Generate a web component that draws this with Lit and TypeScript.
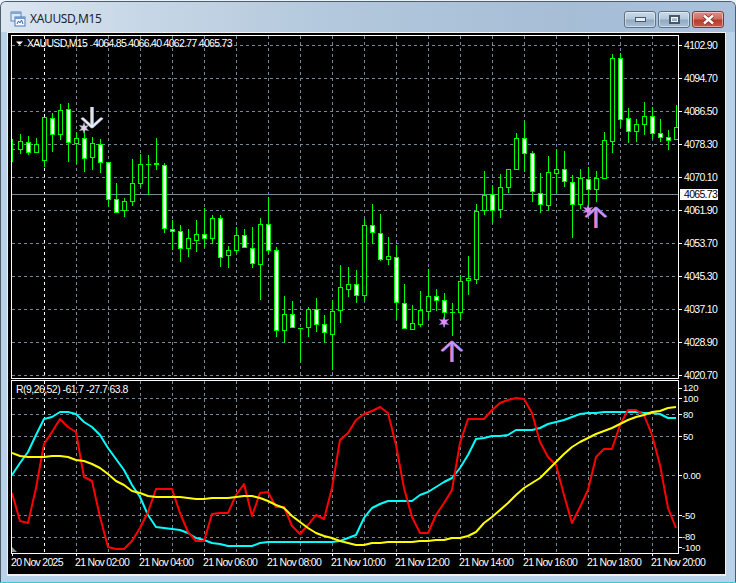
import { LitElement, html, css, svg } from "lit";
import { customElement } from "lit/decorators.js";

// [wick top, wick bottom, body top, body bottom, filled]
const CANDLES: [number, number, number, number, number][] = [
  [139, 162, 149, 149, 0], [134, 154, 141, 149, 0], [136, 155, 142, 152, 1], [138, 153, 144, 152, 0],
  [117, 167, 117, 160, 0], [113, 152, 118, 134, 1], [104, 140, 110, 134, 0], [103, 162, 109, 142, 1],
  [132, 164, 138, 143, 0], [130, 172, 138, 158, 1], [137, 170, 143, 157, 0], [139, 173, 144, 162, 1],
  [162, 207, 162, 199, 1], [183, 213, 199, 212, 1], [198, 217, 201, 210, 0], [159, 206, 183, 201, 0],
  [154, 187, 164, 183, 0], [155, 195, 164, 164, 0], [138, 170, 163, 164, 1], [163, 233, 165, 228, 1],
  [220, 250, 229, 231, 1], [225, 262, 231, 248, 1], [229, 257, 238, 248, 0], [220, 252, 234, 240, 0],
  [208, 248, 234, 238, 1], [215, 244, 218, 238, 0], [215, 267, 218, 257, 1], [246, 268, 250, 255, 0],
  [227, 253, 235, 250, 0], [229, 248, 235, 247, 1], [227, 268, 248, 263, 1], [218, 300, 224, 264, 0],
  [197, 253, 224, 250, 1], [247, 337, 250, 330, 1], [296, 343, 314, 330, 0], [301, 328, 314, 327, 1],
  [328, 362, 328, 328, 0], [307, 337, 309, 327, 0], [298, 332, 309, 324, 1], [315, 343, 324, 332, 1],
  [300, 370, 311, 334, 0], [265, 323, 287, 310, 0], [267, 297, 284, 289, 0], [270, 303, 284, 295, 1],
  [219, 301, 225, 295, 0], [204, 244, 225, 232, 1], [214, 261, 233, 259, 1], [237, 265, 256, 259, 0],
  [245, 319, 257, 302, 1], [284, 328, 303, 328, 1], [305, 329, 323, 329, 0], [291, 327, 310, 324, 0],
  [269, 319, 296, 311, 0], [289, 311, 296, 300, 1], [293, 327, 300, 312, 1], [303, 336, 312, 312, 0],
  [275, 320, 281, 312, 0], [256, 295, 278, 280, 0], [204, 284, 211, 279, 0], [171, 215, 195, 210, 0],
  [185, 223, 194, 210, 1], [174, 218, 187, 209, 0], [169, 193, 169, 187, 0], [133, 170, 138, 169, 0],
  [121, 172, 138, 153, 1], [151, 202, 153, 191, 1], [173, 213, 193, 204, 1], [156, 210, 172, 205, 0],
  [149, 193, 169, 173, 0], [151, 187, 169, 181, 1], [175, 238, 182, 204, 1], [169, 209, 178, 204, 0],
  [167, 207, 179, 189, 1], [171, 202, 178, 189, 0], [132, 179, 140, 178, 0], [54, 153, 58, 141, 0],
  [53, 127, 58, 119, 1], [108, 143, 118, 131, 1], [119, 142, 124, 131, 0], [102, 135, 116, 124, 0],
  [107, 139, 116, 133, 1], [119, 142, 133, 137, 1], [130, 150, 137, 140, 1], [105, 140, 127, 139, 0],
];

const RED = [493, 521, 523, 488, 444, 432, 419, 427, 432, 477, 481, 517, 547, 549, 549, 541, 528, 512, 489, 489, 489, 513, 532, 541, 541, 514, 513, 513, 495, 484, 516, 493, 492, 507, 507, 526, 534, 525, 515, 519, 488, 440, 433, 420, 414, 411, 407, 413, 445, 488, 517, 533, 533, 515, 503, 490, 443, 419, 419, 419, 410, 403, 400, 398, 399, 413, 442, 457, 465, 495, 523, 507, 490, 457, 449, 449, 425, 410, 410, 415, 435, 465, 508, 528];
const CYAN = [475, 463, 452, 435, 419, 417, 412, 412, 414, 422, 427, 435, 448, 459, 470, 485, 497, 515, 527, 528, 529, 530, 533, 538, 540, 543, 544, 546, 546, 546, 546, 543, 542, 542, 542, 542, 542, 542, 542, 542, 542, 541, 538, 535, 518, 508, 504, 501, 501, 501, 501, 495, 492, 487, 482, 478, 468, 455, 439, 438, 436, 436, 435, 430, 430, 430, 428, 424, 422, 420, 417, 414, 413, 413, 412, 412, 412, 412, 412, 413, 413, 414, 418, 418];
const YELLOW = [453, 456, 457, 457, 457, 456, 456, 457, 460, 461, 464, 468, 474, 481, 485, 491, 493, 496, 497, 497, 497, 497, 498, 499, 499, 498, 498, 498, 497, 496, 496, 498, 501, 505, 508, 516, 522, 528, 533, 536, 538, 541, 543, 545, 545, 543, 543, 542, 542, 542, 542, 541, 541, 540, 540, 538, 538, 536, 532, 523, 517, 510, 503, 495, 488, 483, 478, 470, 462, 454, 447, 442, 438, 434, 431, 428, 424, 420, 417, 415, 412, 411, 408, 407];

const PRICES: [string, number][] = [
  ["4102.90", 45], ["4094.70", 78], ["4086.50", 111], ["4078.30", 144], ["4070.10", 177], ["4061.90", 210],
  ["4053.70", 243], ["4045.30", 276], ["4037.10", 309], ["4028.90", 342], ["4020.70", 375],
];
// label, tick y, has grid line, text nudge so the tight pairs keep apart
const LEVELS: [string, number, boolean, number][] = [
  ["120", 388, false, -0.5], ["100", 398, true, 0.5], ["80", 414, true, 0], ["50", 436, true, 0], ["0.00", 475, true, 0],
  ["-50", 515, true, 0], ["-80", 537, true, -0.5], ["-100", 547, false, 0.5],
];
const TIMES: [string, number][] = [
  ["20 Nov 2025", 12], ["21 Nov 02:00", 76], ["21 Nov 04:00", 140], ["21 Nov 06:00", 204], ["21 Nov 08:00", 268],
  ["21 Nov 10:00", 332], ["21 Nov 12:00", 396], ["21 Nov 14:00", 460], ["21 Nov 16:00", 524], ["21 Nov 18:00", 588],
  ["21 Nov 20:00", 652],
];

const L = 11, R = 678, TOP = 35, MID = 378, SUB = 380, BOT = 553;

const points = (ys: number[]) => ys.map((y, i) => `${12 + 8 * i},${y}`).join(" ");

@customElement("mt-chart")
class MtChart extends LitElement {
  static styles = css`
    :host {
      display: block;
      flex: 1;
      min-height: 0;
      background: #000;
    }
    svg {
      display: block;
      width: 100%;
      height: 100%;
    }
    text {
      font-family: "Liberation Sans", Arial, sans-serif;
      font-size: 10.5px;
      letter-spacing: -0.7px;
      fill: #fff;
    }
    text.level {
      font-size: 9.5px;
      letter-spacing: -0.2px;
    }
    text.legend {
      letter-spacing: -0.55px;
    }
    .crisp {
      shape-rendering: crispEdges;
    }
    .grid {
      stroke: #778899;
      stroke-width: 1;
      stroke-dasharray: 3 3;
      fill: none;
    }
    .day {
      stroke: #fff;
    }
    .frame {
      stroke: #fff;
      stroke-width: 1;
      fill: none;
    }
    .bid {
      stroke: #778899;
      stroke-width: 1;
    }
    .wick {
      stroke: #00ff00;
      stroke-width: 1;
    }
    .body {
      stroke: #00ff00;
      stroke-width: 1;
      fill: #000;
    }
    .body.down {
      fill: #fff;
    }
    .ind {
      fill: none;
      stroke-width: 2;
      stroke-linejoin: round;
    }
    .label-box {
      fill: #fff;
    }
    .label-text {
      fill: #000;
    }
    .arrow {
      fill: none;
      stroke-width: 2.2;
    }
    .arrow.core {
      stroke-width: 1.4;
    }
  `;

  private vline(x: number, y1: number, y2: number, cls = "grid") {
    return svg`<line class=${cls} x1=${x + 0.5} x2=${x + 0.5} y1=${y1} y2=${y2}></line>`;
  }

  private hline(y: number, x1: number, x2: number, cls = "grid") {
    return svg`<line class=${cls} x1=${x1} x2=${x2} y1=${y + 0.5} y2=${y + 0.5}></line>`;
  }

  private candle(c: [number, number, number, number, number], i: number) {
    const x = 12 + 8 * i;
    const [wt, wb, bt, bb, filled] = c;
    // a candle at the edge is cut by the clip rect
    return svg`
      <line class="wick" x1=${x + 0.5} x2=${x + 0.5} y1=${wt} y2=${wb}></line>
      ${bb - bt < 1
        ? svg`<line class="wick" x1=${x - 2} x2=${x + 3} y1=${bt + 0.5} y2=${bt + 0.5}></line>`
        : svg`<rect class="body ${filled ? "down" : ""}" x=${x - 1.5} y=${bt + 0.5} width="4" height=${bb - bt}></rect>`}
    `;
  }

  private arrow(x: number, tip: number, dir: number, main: string, edge: string, shade: string) {
    const wing = tip + dir * 10;
    const end = tip + dir * 21;
    const d = `M${x - 10} ${wing} L${x} ${tip + dir} L${x + 10} ${wing} M${x} ${tip + dir} L${x} ${end}`;
    return svg`
      <path class="arrow" d=${d} stroke=${edge} transform="translate(-0.7 0)"></path>
      <path class="arrow" d=${d} stroke=${shade} transform="translate(0.7 0)"></path>
      <path class="arrow core" d=${d} stroke=${main}></path>
    `;
  }

  private star(cx: number, cy: number, fill: string, edge: string) {
    const pts: string[] = [];
    for (let k = 0; k < 12; k++) {
      const r = k % 2 ? 2.4 : 5.4;
      const a = (Math.PI / 6) * k;
      pts.push(`${(cx + r * Math.sin(a)).toFixed(1)},${(cy - r * Math.cos(a)).toFixed(1)}`);
    }
    return svg`<polygon points=${pts.join(" ")} fill=${fill} stroke=${edge} stroke-width="0.5"></polygon>`;
  }

  render() {
    const verts: number[] = [];
    for (let x = 44; x < R; x += 32) verts.push(x);
    return html`
      <svg viewBox="8 33 717 541">
        <defs>
          <clipPath id="main"><rect x=${L + 1} y=${TOP + 1} width=${R - L - 1} height=${MID - TOP - 1}></rect></clipPath>
          <clipPath id="sub"><rect x=${L + 1} y=${SUB + 1} width=${R - L - 1} height=${BOT - SUB - 1}></rect></clipPath>
        </defs>

        <g class="crisp">
          ${verts.map((x) => this.vline(x, TOP + 1, MID, x === 44 ? "grid day" : "grid"))}
          ${verts.map((x) => this.vline(x, SUB + 1, BOT, x === 44 ? "grid day" : "grid"))}
          ${PRICES.map(([, y]) => this.hline(y, L + 1, R))}
          ${LEVELS.filter((l) => l[2]).map(([, y]) => this.hline(y, L + 1, R))}
          ${this.hline(194, L + 1, R, "bid")}
          <g clip-path="url(#main)">${CANDLES.map((c, i) => this.candle(c, i))}</g>
          <rect class="frame" x=${L + 0.5} y=${TOP + 0.5} width=${R - L} height=${MID - TOP}></rect>
          <rect class="frame" x=${L + 0.5} y=${SUB + 0.5} width=${R - L} height=${BOT - SUB}></rect>
          ${PRICES.map(([, y]) => this.hline(y, R, R + 4, "frame"))}
          ${LEVELS.map(([, y]) => this.hline(y, R, R + 4, "frame"))}
          ${TIMES.map(([, x]) => this.vline(x, BOT, BOT + 3, "frame"))}
        </g>

        <g clip-path="url(#sub)">
          <polyline class="ind" stroke="#00ffff" points=${points(CYAN)}></polyline>
          <polyline class="ind" stroke="#ff0000" points=${points(RED)}></polyline>
          <polyline class="ind" stroke="#ffff00" points=${points(YELLOW)}></polyline>
        </g>

        <polygon points="12,547 17,552 12,552" fill="#8a949e"></polygon>
        <polygon points="16,41.5 23,41.5 19.5,45" fill="#fff"></polygon>

        ${this.star(84, 128, "#dcd4e0", "#8088a8")}
        ${this.arrow(92, 128, -1, "#eef2fa", "#c8b8b8", "#a8c0e8")}
        ${this.star(444, 322, "#e48cf2", "#7a70e8")}
        ${this.arrow(452, 341, 1, "#c79cff", "#f070b0", "#8070f0")}
        ${this.star(588, 210, "#e48cf2", "#7a70e8")}
        ${this.arrow(596, 207, 1, "#c79cff", "#f070b0", "#8070f0")}

        <text x="27" y="47">XAUUSD,M15</text>
        <text x="93" y="47">4064.85 4066.40 4062.77 4065.73</text>
        <text class="legend" x="16" y="393">R(9,26,52) -61.7 -27.7 63.8</text>

        ${PRICES.map(([t, y]) => svg`<text x="684" y=${y + 4}>${t}</text>`)}
        ${LEVELS.map(([t, y, , n]) => svg`<text class="level" x=${t.startsWith("-") ? 682 : 683} y=${y + 3.5 + n}>${t}</text>`)}
        ${TIMES.map(([t, x]) => svg`<text x=${x - 1} y="566">${t}</text>`)}

        <rect class="label-box" x="680" y="189" width="38" height="11"></rect>
        <text class="label-text" x="684" y="198">4065.73</text>
      </svg>
    `;
  }
}

@customElement("app-root")
export class AppRoot extends LitElement {
  static styles = css`
    :host {
      display: block;
      width: 736px;
      height: 583px;
      background: #e8f2f8;
      overflow: hidden;
    }
    .window {
      box-sizing: border-box;
      width: 736px;
      height: 581px;
      margin-top: 1px;
      border: 1px solid #4e5d6c;
      border-bottom: none;
      border-radius: 6px 6px 0 0;
      background: #b9d1e9;
      display: flex;
      flex-direction: column;
    }
    .titlebar {
      height: 30px;
      flex: none;
      box-sizing: border-box;
      padding: 3px 11px 0 9px;
      border-radius: 5px 5px 0 0;
      display: flex;
      align-items: center;
      gap: 4px;
      background: linear-gradient(90deg, #dbe6f0 0%, #c6d6e6 20%, #b3c8dc 45%, #a6bdd6 78%, #a9c2dc 100%);
    }
    .title {
      flex: 1;
      font-family: "Noto Sans", "Open Sans", sans-serif;
      font-size: 12px;
      letter-spacing: -0.35px;
      color: #1a2430;
    }
    .buttons {
      display: flex;
      gap: 2px;
      align-self: flex-start;
      margin-top: 6px;
    }
    .btn {
      box-sizing: border-box;
      width: 32px;
      height: 17px;
      border: 1px solid #5f7285;
      border-radius: 3px;
      box-shadow: inset 0 0 0 1px rgba(255, 255, 255, 0.45);
      background: linear-gradient(180deg, #c9d9e9 0%, #b4c8dc 48%, #8fa9c2 52%, #a9c1d8 100%);
      display: flex;
      align-items: center;
      justify-content: center;
    }
    .btn.close {
      border-color: #7c3a34;
      background: linear-gradient(180deg, #dd8f82 0%, #cf6c5e 48%, #b43a2c 52%, #c75a4c 100%);
    }
    .client {
      flex: none;
      height: 544px;
      margin: 0 9px 0 6px;
      border: solid #f0f0f0;
      border-width: 1px 1px 2px 1px;
      box-sizing: border-box;
      display: flex;
      flex-direction: column;
    }
    .desktop {
      height: 1px;
      background: #3fc4da;
    }
  `;

  render() {
    return html`
      <div class="window">
        <div class="titlebar">
          <svg width="16" height="16" viewBox="0 0 16 16">
            <rect x="1" y="1" width="10" height="9" fill="#dfeaf6" stroke="#5f86b8"></rect>
            <rect x="1" y="1" width="10" height="2" fill="#7ea6d6"></rect>
            <rect x="5" y="6" width="10" height="9" fill="#f6fafe" stroke="#4e78ae"></rect>
            <rect x="5" y="6" width="10" height="2" fill="#6f9ad0"></rect>
            <path d="M7 13l1.5-3 1.5 2 1.5-3 1.5 4" fill="none" stroke="#3a6ea8"></path>
          </svg>
          <span class="title">XAUUSD,M15</span>
          <div class="buttons">
            <div class="btn">
              <svg width="11" height="5" viewBox="0 0 11 5"><rect x="0.5" y="0.5" width="10" height="4" fill="#e8eef4" stroke="#47586a"></rect></svg>
            </div>
            <div class="btn">
              <svg width="11" height="9" viewBox="0 0 11 9"><rect x="1" y="1" width="9" height="7" fill="none" stroke="#47586a" stroke-width="2"></rect><rect x="2.5" y="2.5" width="6" height="4" fill="none" stroke="#eef3f8"></rect></svg>
            </div>
            <div class="btn close">
              <svg width="13" height="11" viewBox="0 0 13 11"><path d="M2 1.5L11 9.5M11 1.5L2 9.5" stroke="#7a2c24" stroke-width="4"></path><path d="M2 1.5L11 9.5M11 1.5L2 9.5" stroke="#fff" stroke-width="2.4"></path></svg>
            </div>
          </div>
        </div>
        <div class="client"><mt-chart></mt-chart></div>
      </div>
      <div class="desktop"></div>
    `;
  }
}
